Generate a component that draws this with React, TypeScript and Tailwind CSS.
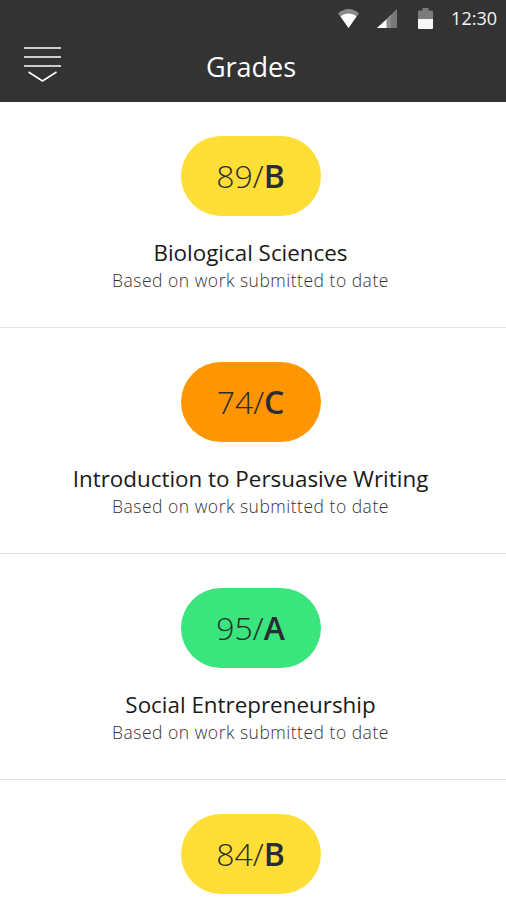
const grades = [
  { score: '89', letter: 'B', title: 'Biological Sciences', color: 'bg-[#ffde37]' },
  { score: '74', letter: 'C', title: 'Introduction to Persuasive Writing', color: 'bg-[#ff9500]' },
  { score: '95', letter: 'A', title: 'Social Entrepreneurship', color: 'bg-[#39e57c]' },
  { score: '84', letter: 'B', color: 'bg-[#ffde37]' },
];

function StatusBar() {
  return (
    <div className="h-[36px] flex items-center justify-end pr-[9px] text-white">
      {/* wifi */}
      <svg width="21" height="19" viewBox="0 0 21 19" className="mr-[18px] mt-[1px]">
        <path d="M0 4.5C3 1.6 6.6 0 10.5 0S18 1.6 21 4.5L10.5 19z" fill="#8a8a8a" />
        <path d="M2.6 7.4C5 5.6 7.6 4.6 10.5 4.6s5.5 1 7.9 2.8L10.5 19z" fill="#fff" />
      </svg>
      {/* signal */}
      <svg width="20" height="19" viewBox="0 0 20 19" className="mr-[21px] mt-[1px]">
        <path d="M20 0v19H0z" fill="#777" />
        <path d="M14 6v13H0z" fill="#8c8c8c" />
        <path d="M9.5 10.5V19H0z" fill="#fff" />
      </svg>
      {/* battery */}
      <svg width="15" height="21" viewBox="0 0 15 21" className="mr-[18px]">
        <path d="M4.5 0h6v2.5h3A1.5 1.5 0 0 1 15 4v15.500a1.500 1.500 0 0 1-1.500 1.500h-12A1.500 1.500 0 0 1 0 19.500V4a1.500 1.500 0 0 1 1.500-1.500h3z" fill="#7c7c7c" />
        <path d="M0 11h15v8.500a1.500 1.500 0 0 1-1.500 1.500h-12A1.500 1.500 0 0 1 0 19.500z" fill="#f6f6f6" />
      </svg>
      <span className="text-[18px] leading-none text-[#f4f4f4]">12:30</span>
    </div>
  );
}

function MenuIcon() {
  return (
    <svg width="38" height="38" viewBox="0 0 38 38" className="shrink-0">
      <path d="M0 1h37M0 10h37M0 19h37" stroke="#fff" strokeWidth="1.5" fill="none" />
      <path d="M4.5 25l14 9 14-9" stroke="#fff" strokeWidth="1.5" fill="none" />
    </svg>
  );
}

export default function App() {
  return (
    <div className="w-[506px] h-[900px] overflow-hidden bg-white font-['Open_Sans',sans-serif]">
      <header className="h-[102px] bg-[#333333]">
        <StatusBar />
        <div className="relative h-[66px] flex items-start justify-center pt-[15px] pr-[4px]">
          <div className="absolute left-[24px] top-[11px]">
            <MenuIcon />
          </div>
          <h1 className="text-[27px] leading-[32px] font-normal text-white">Grades</h1>
        </div>
      </header>

      <main>
        {grades.map((g) => (
          <section key={g.score} className="h-[226px] pt-[34px] pr-[5px] flex flex-col items-center border-b border-[#e4e4e4]">
            <div className={`w-[140px] h-[80px] rounded-[40px] flex items-center justify-center text-[32px] leading-none text-[#2b2b33] ${g.color}`}>
              <span className="font-light">{g.score}/</span>
              <span className="font-semibold">{g.letter}</span>
            </div>
            {g.title && (
              <>
                <h2 className="mt-[22px] text-[22.4px] leading-[30px] font-normal text-[#1a1a1a]">{g.title}</h2>
                <p className="text-[17.5px] leading-[24px] font-light text-[#333333] tracking-[0.5px]">Based on work submitted to date</p>
              </>
            )}
          </section>
        ))}
      </main>
    </div>
  );
}
